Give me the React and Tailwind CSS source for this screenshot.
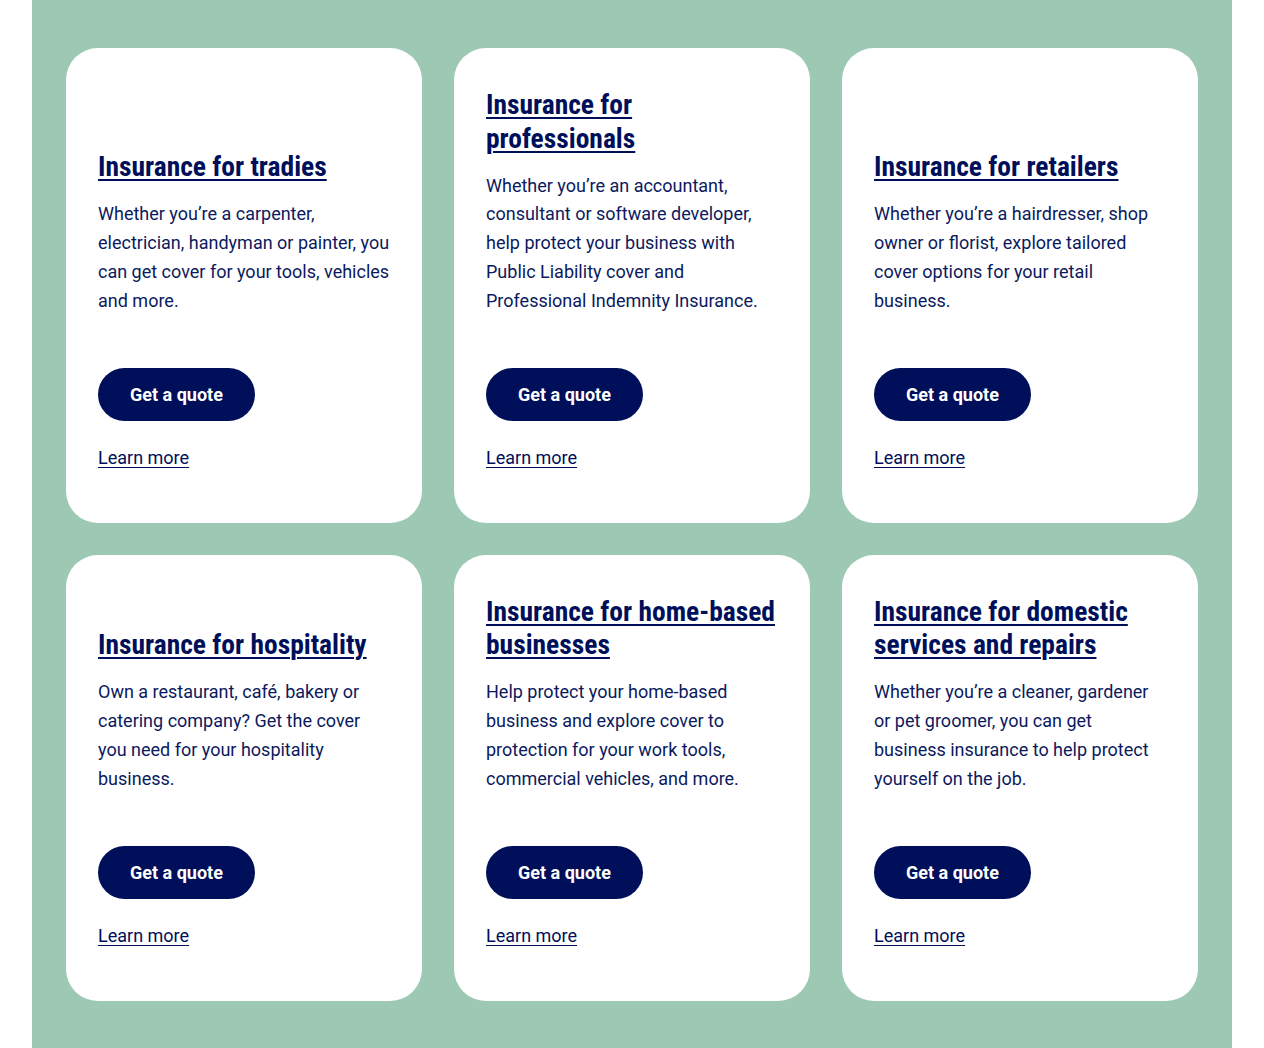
const cards = [
  {
    title: "Insurance for tradies",
    body: "Whether you’re a carpenter, electrician, handyman or painter, you can get cover for your tools, vehicles and more.",
  },
  {
    title: "Insurance for professionals",
    body: "Whether you’re an accountant, consultant or software developer, help protect your business with Public Liability cover and Professional Indemnity Insurance.",
  },
  {
    title: "Insurance for retailers",
    body: "Whether you’re a hairdresser, shop owner or florist, explore tailored cover options for your retail business.",
  },
  {
    title: "Insurance for hospitality",
    body: "Own a restaurant, café, bakery or catering company? Get the cover you need for your hospitality business.",
  },
  {
    title: "Insurance for home-based businesses",
    body: "Help protect your home-based business and explore cover to protection for your work tools, commercial vehicles, and more.",
  },
  {
    title: "Insurance for domestic services and repairs",
    body: "Whether you’re a cleaner, gardener or pet groomer, you can get business insurance to help protect yourself on the job.",
  },
];

function Card({ title, body }) {
  return (
    <div className="flex flex-col rounded-[32px] bg-white px-8 pt-10 pb-[53px]">
      <div className="flex flex-1 flex-col justify-end">
        <a
          href="#"
          className="text-[27.5px] font-bold leading-[33.6px] text-[#000f5a] underline decoration-2 underline-offset-[3px] [font-stretch:condensed]"
          style={{ fontFamily: '"Roboto Condensed", Roboto, sans-serif' }}
        >
          {title}
        </a>
        <p className="mt-[16.5px] text-[18px] leading-[28.8px] text-[#0b1a5e]">{body}</p>
      </div>
      <div className="mt-[52px]">
        <button className="h-[53px] rounded-full bg-[#000f5a] px-8 text-[18px] font-bold text-white">
          Get a quote
        </button>
      </div>
      <a href="#" className="mt-[25px] self-start text-[18px] leading-6 text-[#000f5a] underline underline-offset-[3px]">
        Learn more
      </a>
    </div>
  );
}

export default function App() {
  return (
    <div className="bg-white px-8" style={{ fontFamily: 'Roboto, "Liberation Sans", sans-serif' }}>
      <div className="bg-[#9dc8b4] px-[34px] pt-12 pb-12">
        <div className="grid grid-cols-3 gap-x-8 gap-y-8">
          {cards.map((c) => (
            <Card key={c.title} {...c} />
          ))}
        </div>
      </div>
    </div>
  );
}
